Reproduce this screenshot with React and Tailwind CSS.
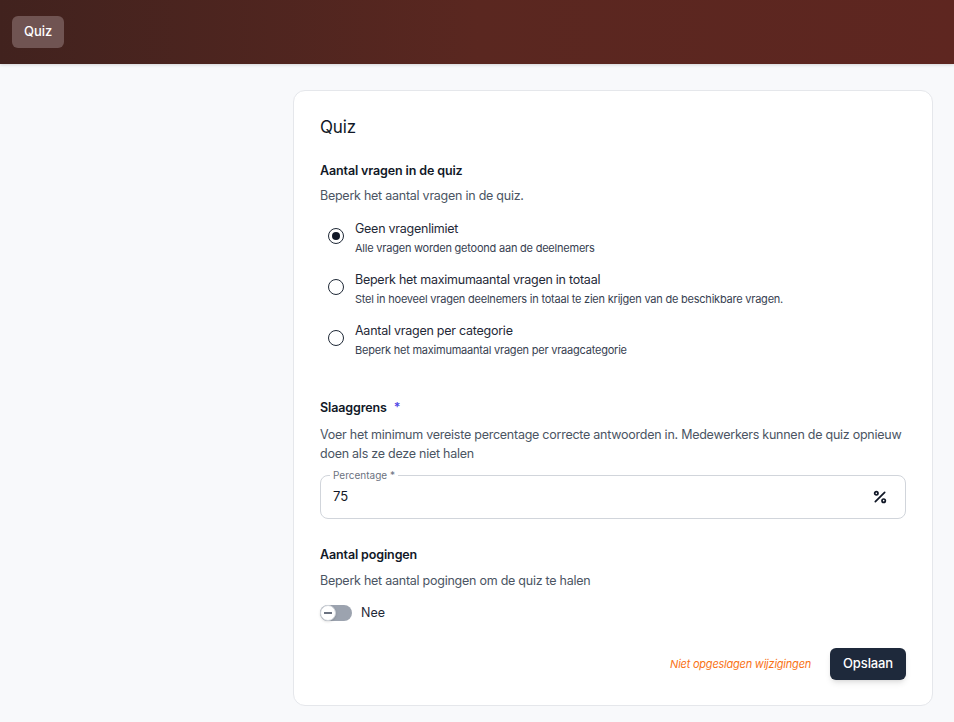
import { Percent } from "lucide-react";

const options = [
  {
    title: "Geen vragenlimiet",
    desc: "Alle vragen worden getoond aan de deelnemers",
    checked: true,
  },
  {
    title: "Beperk het maximumaantal vragen in totaal",
    desc: "Stel in hoeveel vragen deelnemers in totaal te zien krijgen van de beschikbare vragen.",
  },
  {
    title: "Aantal vragen per categorie",
    desc: "Beperk het maximumaantal vragen per vraagcategorie",
  },
];

const Radio = ({ checked }) => (
  <span className="mt-[8px] flex h-4 w-4 shrink-0 items-center justify-center rounded-full border-[1.5px] border-[#1f2937] bg-white">
    {checked && <span className="h-2 w-2 rounded-full bg-[#111827]" />}
  </span>
);

const App = () => {
  return (
    <div
      className="min-h-[722px] bg-[#f8f9fb] text-[#111827]"
      style={{ fontFamily: "Inter, 'Noto Sans', sans-serif" }}
    >
      <header className="flex h-16 items-center bg-gradient-to-r from-[#41221e] via-[#5a2720] to-[#5e2620] px-3 shadow-[0_1px_3px_rgba(0,0,0,0.15)]">
        <button className="h-8 rounded-md bg-[#705452] px-3 text-[13px] font-medium text-white">
          Quiz
        </button>
      </header>

      <div className="grid grid-cols-[293px_640px] pt-[26px]">
        <div />
        <div className="rounded-xl border border-[#e5e7eb] bg-white px-[26px] pb-[25px] pt-[24px]">
          <h1 className="text-[17px] leading-6 tracking-[-0.01em] text-[#111827]">Quiz</h1>

          <h2 className="mt-[22px] text-[12.5px] font-semibold leading-5 tracking-[-0.01em]">
            Aantal vragen in de quiz
          </h2>
          <p className="mt-[5px] text-[12.5px] leading-5 tracking-[-0.02em] text-[#4b5563]">
            Beperk het aantal vragen in de quiz.
          </p>

          <div className="mt-[14px] flex flex-col gap-[15px] pl-2">
            {options.map((o) => (
              <label key={o.title} className="flex gap-[11px]">
                <Radio checked={o.checked} />
                <span className="flex flex-col gap-[2px]">
                  <span className="text-[12.5px] leading-[18px] tracking-[-0.02em] text-[#1f2937]">
                    {o.title}
                  </span>
                  <span className="text-[11px] leading-4 tracking-[-0.02em] text-[#374151]">
                    {o.desc}
                  </span>
                </span>
              </label>
            ))}
          </div>

          <h2 className="mt-[40px] text-[12.5px] font-semibold leading-5 tracking-[-0.01em]">
            Slaaggrens <span className="ml-1 text-[#4f46e5]">*</span>
          </h2>
          <p className="mt-[7px] text-[12.5px] leading-[19px] tracking-[-0.02em] text-[#4b5563]">
            Voer het minimum vereiste percentage correcte antwoorden in.
            Medewerkers kunnen de quiz opnieuw doen als ze deze niet halen
          </p>

          <div className="relative mt-[12px] flex h-[44px] items-center justify-between rounded-lg border border-[#d1d5db] px-3">
            <span className="absolute left-[9px] top-[-7px] bg-white px-[3px] text-[10px] leading-3 text-[#6b7280]">
              Percentage *
            </span>
            <span className="text-[13px] text-[#111827]">75</span>
            <Percent size={16} strokeWidth={2.6} className="mr-[5px] text-[#111827]" />
          </div>

          <h2 className="mt-[26px] text-[12.5px] font-semibold leading-5 tracking-[-0.01em]">
            Aantal pogingen
          </h2>
          <p className="mt-[6px] text-[12.5px] leading-5 tracking-[-0.02em] text-[#4b5563]">
            Beperk het aantal pogingen om de quiz te halen
          </p>

          <div className="mt-[12px] flex h-5 items-center gap-[9px]">
            <span className="relative flex h-4 w-8 items-center rounded-full bg-[#9ca3af]">
              <span className="flex h-4 w-4 items-center justify-center rounded-full border border-[#d1d5db] bg-white shadow-sm">
                <span className="h-[1.5px] w-[8px] bg-[#6b7280]" />
              </span>
            </span>
            <span className="text-[12.5px] text-[#1f2937]">Nee</span>
          </div>

          <div className="mt-[25px] flex items-center justify-end gap-[19px]">
            <span className="text-[11px] italic tracking-[-0.02em] text-[#f97316]">
              Niet opgeslagen wijzigingen
            </span>
            <button className="h-8 rounded-md bg-[#1e293b] px-[13px] text-[13px] font-medium tracking-[-0.01em] text-white shadow-md">
              Opslaan
            </button>
          </div>
        </div>
      </div>
    </div>
  );
};

export default App;
